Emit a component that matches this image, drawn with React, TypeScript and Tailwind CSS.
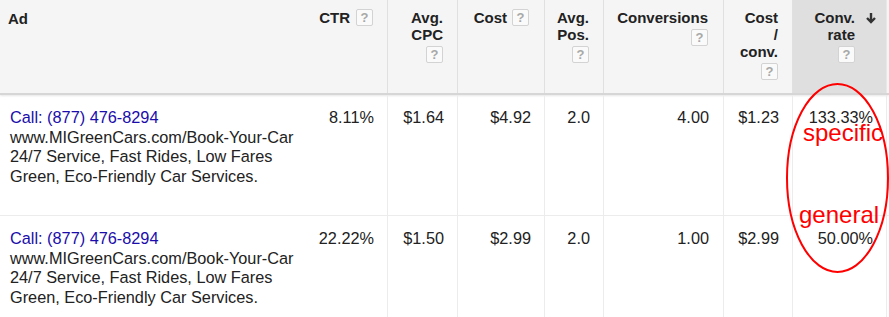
import React from "react";

const font = { fontFamily: '"Liberation Sans", Arial, sans-serif' };

function Help() {
  return (
    <span className="inline-flex h-[17px] w-[17px] items-center justify-center rounded-[2px] border border-[#d3d3d3] bg-[#fafafa] text-[13px] font-bold leading-none text-[#a8a8a8]">
      ?
    </span>
  );
}

const rows = [
  { ctr: "8.11%", cpc: "$1.64", cost: "$4.92", pos: "2.0", conv: "4.00", cpa: "$1.23", rate: "133.33%" },
  { ctr: "22.22%", cpc: "$1.50", cost: "$2.99", pos: "2.0", conv: "1.00", cpa: "$2.99", rate: "50.00%" },
];

export default function App() {
  return (
    <div className="relative h-[317px] w-[889px] overflow-hidden bg-white text-[#222]" style={font}>
      {/* header */}
      <div className="flex h-[95px] border-b-2 border-[#d6d6d6] bg-[#f5f5f5] text-[15px] font-bold leading-[17px] shadow-[0_1px_2px_rgba(0,0,0,0.1)]">
        <div className="w-[300px] pl-[8px] pt-[10px]">Ad</div>
        <div className="flex w-[88px] items-start justify-end border-r border-[#e0e0e0] pr-[14px] pt-[9px]">
          <div className="flex items-center gap-[6px]">
            <span>CTR</span>
            <Help />
          </div>
        </div>
        <div className="flex w-[70px] flex-col items-end border-r border-[#e0e0e0] pr-[14px] pt-[9px]">
          <div>Avg.</div>
          <div>CPC</div>
          <div className="mt-[2px]"><Help /></div>
        </div>
        <div className="flex w-[87px] items-start justify-end border-r border-[#e0e0e0] pr-[15px] pt-[9px]">
          <div className="flex items-center gap-[5px]">
            <span>Cost</span>
            <Help />
          </div>
        </div>
        <div className="flex w-[59px] flex-col items-end border-r border-[#e0e0e0] pr-[14px] pt-[9px]">
          <div>Avg.</div>
          <div>Pos.</div>
          <div className="mt-[2px]"><Help /></div>
        </div>
        <div className="flex w-[120px] flex-col items-end border-r border-[#e0e0e0] pr-[15px] pt-[9px]">
          <div>Conversions</div>
          <div className="mt-[2px]"><Help /></div>
        </div>
        <div className="flex w-[69px] flex-col items-end border-r border-[#e0e0e0] pr-[14px] pt-[9px]">
          <div>Cost</div>
          <div>/</div>
          <div>conv.</div>
          <div className="mt-[2px]"><Help /></div>
        </div>
        <div className="relative flex w-[94px] flex-col items-end border-r border-[#e8e8e8] bg-[#dfdfdf] pr-[31px] pt-[9px]">
          <div>Conv.</div>
          <div>rate</div>
          <div className="mt-[2px]"><Help /></div>
          <svg className="absolute right-[9px] top-[12px]" width="12" height="12" viewBox="0 0 12 12">
            <path d="M6 1v9M2 6l4 4 4-4" stroke="#333" strokeWidth="2.4" fill="none" />
          </svg>
        </div>
      </div>

      {/* rows */}
      {rows.map((r, i) => (
        <div key={i} className="flex h-[121px] border-b border-[#ececec] text-[16.3px] leading-[19.5px]">
          <div className="w-[300px] pl-[10px] pt-[13px]">
            <div className="text-[#1a0dab]">Call: (877) 476-8294</div>
            <div>www.MIGreenCars.com/Book-Your-Car</div>
            <div>24/7 Service, Fast Rides, Low Fares</div>
            <div>Green, Eco-Friendly Car Services.</div>
          </div>
          <div className="w-[88px] border-r border-[#ececec] pr-[13px] pt-[13px] text-right">{r.ctr}</div>
          <div className="w-[70px] border-r border-[#ececec] pr-[13px] pt-[13px] text-right">{r.cpc}</div>
          <div className="w-[87px] border-r border-[#ececec] pr-[13px] pt-[13px] text-right">{r.cost}</div>
          <div className="w-[59px] border-r border-[#ececec] pr-[13px] pt-[13px] text-right">{r.pos}</div>
          <div className="w-[120px] border-r border-[#ececec] pr-[14px] pt-[13px] text-right">{r.conv}</div>
          <div className="w-[69px] border-r border-[#ececec] pr-[13px] pt-[13px] text-right">{r.cpa}</div>
          <div className="w-[94px] border-r border-[#ececec] pr-[13px] pt-[13px] text-right">{r.rate}</div>
        </div>
      ))}

      {/* annotation */}
      <svg className="pointer-events-none absolute left-[786px] top-[83px]" width="103" height="192" viewBox="0 0 103 192">
        <ellipse cx="51.5" cy="95" rx="50.5" ry="94" stroke="#ff0000" strokeWidth="2" fill="none" />
      </svg>
      <span className="absolute left-[803px] top-[121px] text-[24px] leading-[24px] text-[#ff0000]">specific</span>
      <span className="absolute left-[799px] top-[203px] text-[24px] leading-[24px] text-[#ff0000]">general</span>
    </div>
  );
}
